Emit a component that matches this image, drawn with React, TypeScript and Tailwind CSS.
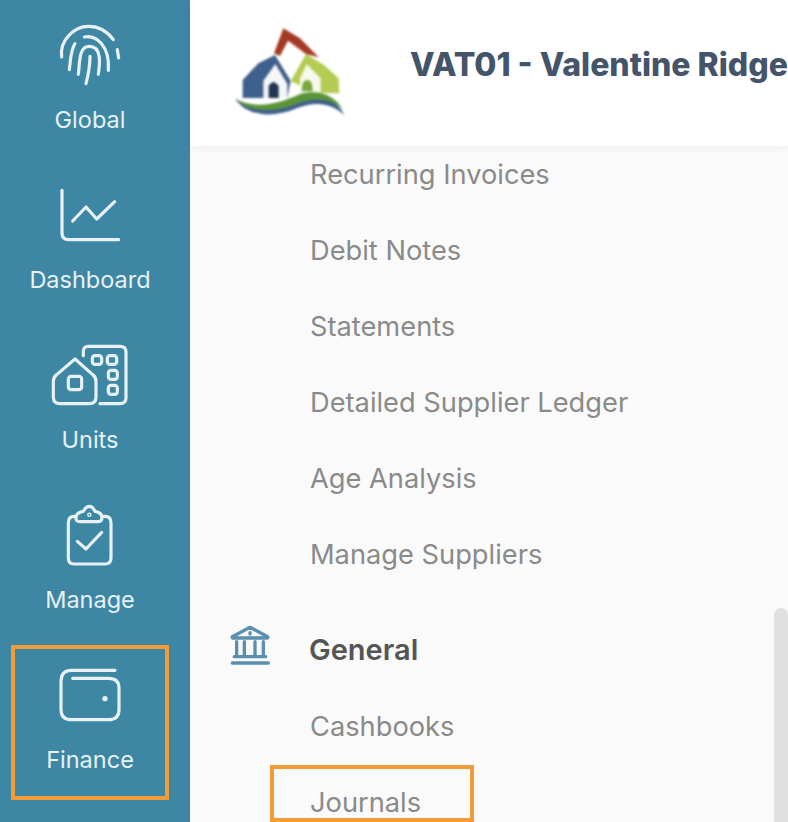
const Icon = ({ y, children }: { y: number; children: React.ReactNode }) => (
  <svg
    viewBox={`150 ${y} 240 190`}
    className="w-[80px] h-[63.33px] shrink-0"
    fill="none"
    stroke="#e8f1f5"
    strokeWidth={9.5}
    strokeLinecap="round"
    strokeLinejoin="round"
  >
    {children}
  </svg>
);

const NavItem = ({ children }: { children: React.ReactNode }) => (
  <div className="relative h-[160px] flex flex-col items-center pt-[23.33px]">{children}</div>
);

const Label = ({ children }: { children: React.ReactNode }) => (
  <div className="absolute left-0 right-0 top-[104px] h-[32px] flex items-center justify-center text-[23.5px] leading-none text-[#e8f1f5]">
    {children}
  </div>
);

const sub1 = ["Recurring Invoices", "Debit Notes", "Statements", "Detailed Supplier Ledger", "Age Analysis", "Manage Suppliers"];

const Row = ({ children }: { children: React.ReactNode }) => (
  <div className="h-[76px] flex items-center pl-[120px] pt-[2px] text-[27.25px] text-[#8a8a8a]">{children}</div>
);

export default function App() {
  return (
    <div className="w-[788px] h-[822px] overflow-hidden flex bg-[#fafafa] font-['Inter','Liberation_Sans',sans-serif]">
      <aside className="w-[190px] h-full shrink-0 bg-[#3d87a5] flex flex-col pr-[10px]">
        <NavItem>
          <Icon y={70}>
            <path d="M185 172C178 120 225 80 265 80C295 80 322 95 340 120" />
            <path d="M352 150L356 175" />
            <path d="M208 210C212 180 212 150 225 132" />
            <path d="M253 112C290 105 330 140 325 212" />
            <path d="M235 224C240 190 235 140 268 140C305 140 300 190 295 224" />
            <path d="M270 170C270 200 265 225 258 252" />
          </Icon>
          <Label>Global</Label>
        </NavItem>
        <NavItem>
          <Icon y={550}>
            <path d="M186 572V700Q186 720 206 720H356" />
            <path d="M218 664L258 622L290 658L344 606" />
          </Icon>
          <Label>Dashboard</Label>
        </NavItem>
        <NavItem>
          <Icon y={70}>
            <path d="M225 118L170 165Q160 172 160 185V232Q160 252 180 252H268Q288 252 288 232V185Q288 172 278 165Z" />
            <rect x="205" y="170" width="40" height="40" rx="8" />
            <path d="M250 108V95Q250 80 265 80H360Q378 80 378 97V235Q378 252 360 252H300" />
            <rect x="277" y="108" width="28" height="26" rx="8" />
            <rect x="322" y="108" width="28" height="26" rx="8" />
            <rect x="325" y="152" width="27" height="27" rx="8" />
            <rect x="325" y="197" width="27" height="27" rx="8" />
          </Icon>
          <Label>Units</Label>
        </NavItem>
        <NavItem>
          <Icon y={550}>
            <path d="M228 590H222Q205 590 205 610V715Q205 733 222 733H315Q333 733 333 715V610Q333 590 315 590H306" />
            <path d="M228 592Q226 606 240 606H295Q306 606 306 592Q304 578 285 575Q278 560 268 560Q258 560 250 575Q230 578 228 592Z" />
            <circle cx="268" cy="585" r="2" />
            <path d="M232 665L258 688L305 638" />
          </Icon>
          <Label>Manage</Label>
        </NavItem>
        <NavItem>
          <Icon y={100}>
            <path d="M345 122H215Q183 122 183 155V240Q183 270 215 270H325Q357 270 357 240V175Q357 146 325 146H218" />
            <circle cx="315" cy="207" r="5" fill="#e8f1f5" strokeWidth={6} />
          </Icon>
          <Label>Finance</Label>
          <div className="absolute left-[11px] top-[5px] w-[158px] h-[155px] border-[4px] border-[#f29b38]" />
        </NavItem>
      </aside>

      <div className="relative flex-1 min-w-0 h-full flex flex-col">
        <header className="relative z-10 h-[146px] shrink-0 bg-white shadow-[0_2px_8px_rgba(0,0,0,0.05)] flex items-center">
          <svg viewBox="0 0 510 390" className="w-[170px] h-[130px] ml-[10px] mt-[4px] shrink-0 blur-[1px]">
            <path d="M222 130L250 55L300 85L356 142L318 132L264 92L240 138Z" fill="#a53a24" />
            <path d="M128 210L175 160L225 135L272 212L262 264H128Z" fill="#3f5f8c" />
            <path d="M190 264V212L226 162L262 222V264Z" fill="#f4f6f8" />
            <path d="M206 264V228Q220 205 236 228V264Z" fill="#1f3550" />
            <path d="M272 214L318 132L372 165L416 205L418 250L350 248Z" fill="#b4cc52" />
            <path d="M300 248V205L320 162L362 205V248Z" fill="#f7f9ec" />
            <path d="M305 244Q305 210 322 210Q338 210 338 244Z" fill="#7aa83c" />
            <path d="M106 266C170 310 240 290 300 262C350 245 405 260 434 316C390 275 340 275 290 295C220 325 140 320 106 266Z" fill="#3f5f8c" />
            <path d="M106 266C170 300 240 280 300 252C350 238 400 250 430 300C390 262 340 262 290 282C220 310 140 305 106 266Z" fill="#5b9438" />
          </svg>
          <h1 className="ml-[40px] mb-[16px] whitespace-nowrap text-[32px] font-extrabold text-[#44546a]">VAT01 - Valentine Ridge</h1>
        </header>
        <main className="flex-1 min-h-0 overflow-hidden">
          <div className="-mt-[10px]">
            {sub1.map((s) => (
              <Row key={s}>{s}</Row>
            ))}
            <div className="mt-[20px] h-[76px] flex items-center relative">
              <svg viewBox="90 75 120 120" className="absolute left-[40px] top-[13px] w-[40px] h-[40px]" fill="none" stroke="#5a8fb0" strokeWidth={10} strokeLinecap="round" strokeLinejoin="round">
                <path d="M150 82L97 110Q95 114 100 114H200Q205 114 203 110Z" />
                <path d="M110 125V165M133 125V165M165 125V165M190 125V165" />
                <path d="M103 170H197" />
                <path d="M97 189H205" />
                <path d="M150 98V102" />
              </svg>
              <span className="pl-[119px] text-[29px] font-semibold text-[#555555]">General</span>
            </div>
            <Row>Cashbooks</Row>
            <div className="relative">
              <Row>Journals</Row>
              <div className="absolute left-[80px] top-[1px] w-[204px] h-[57px] border-[4px] border-[#f29b38]" />
            </div>
          </div>
        </main>
        <div className="absolute right-0 top-[608px] bottom-0 w-[14px] bg-[#e0e0e0] rounded-t-full" />
      </div>
    </div>
  );
}
